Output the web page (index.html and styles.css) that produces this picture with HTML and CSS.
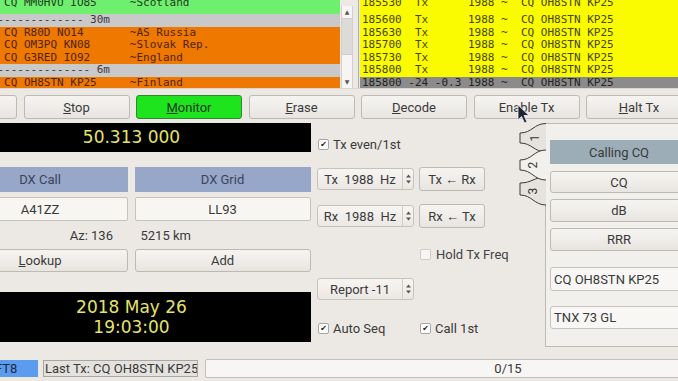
FILE: index.html
```html
<!DOCTYPE html>
<html lang="en">
<head>
  <meta charset="UTF-8" />
  <title>WSJT-X</title>
  <link rel="stylesheet" href="styles.css">
</head>
<body>

  <div class="decodes">
    <div class="pane band">
      <div class="row top green"> CQ MM0HVU IO85     ~Scotland</div>
      <div class="row sep">------------- 30m</div>
      <div class="row orange"> CQ R80D NO14       ~AS Russia</div>
      <div class="row orange"> CQ OM3PQ KN08      ~Slovak Rep.</div>
      <div class="row orange"> CQ G3RED IO92      ~England</div>
      <div class="row sep">-------------- 6m</div>
      <div class="row orange"> CQ OH8STN KP25     ~Finland</div>
    </div>
    <div class="scroll">
      <div class="sb-btn">▲</div>
      <div class="sb-thumb"></div>
      <div class="sb-track"></div>
      <div class="sb-btn">▼</div>
    </div>
    <div class="pane rx">
      <div class="row top yellow">185530  Tx      1988 ~  CQ OH8STN KP25</div>
      <div class="row yellow">185600  Tx      1988 ~  CQ OH8STN KP25</div>
      <div class="row yellow">185630  Tx      1988 ~  CQ OH8STN KP25</div>
      <div class="row yellow">185700  Tx      1988 ~  CQ OH8STN KP25</div>
      <div class="row yellow">185730  Tx      1988 ~  CQ OH8STN KP25</div>
      <div class="row yellow">185800  Tx      1988 ~  CQ OH8STN KP25</div>
      <div class="row dark">185800 -24 -0.3 1988 ~  CQ OH8STN KP25</div>
    </div>
  </div>

  <div class="buttons">
    <div class="btn">Log <u>Q</u>SO</div>
    <div class="btn"><u>S</u>top</div>
    <div class="btn monitor"><u>M</u>onitor</div>
    <div class="btn"><u>E</u>rase</div>
    <div class="btn"><u>D</u>ecode</div>
    <div class="btn">Enable Tx</div>
    <div class="btn"><u>H</u>alt Tx</div>
  </div>

  <div class="main">
    <div class="left">
      <div class="freq">50.313 000</div>
      <div class="pair labels">
        <div class="label-box">DX Call</div>
        <div class="label-box">DX Grid</div>
      </div>
      <div class="pair fields">
        <div class="field">A41ZZ</div>
        <div class="field">LL93</div>
      </div>
      <div class="pair info">
        <div class="az">Az: 136</div>
        <div class="dist">5215 km</div>
      </div>
      <div class="pair lookup">
        <div class="btn"><u>L</u>ookup</div>
        <div class="btn">Add</div>
      </div>
      <div class="clock">
        <div>2018 May 26</div>
        <div>19:03:00</div>
      </div>
    </div>

    <div class="mid">
      <div class="m-row r1">
        <div class="chk-label"><span class="chk on"></span>Tx even/1st</div>
      </div>
      <div class="m-row r2">
        <div class="spin">
          <div class="spin-text">Tx  1988  Hz</div>
          <div class="spin-arrows"><svg width="7" height="14" viewBox="0 0 7 14"><path d="M3.5 2.5L6 5.5H1Z M3.5 11.5L6 8.5H1Z" fill="#555"/></svg></div>
        </div>
        <div class="btn">Tx ← Rx</div>
      </div>
      <div class="m-row r3">
        <div class="spin">
          <div class="spin-text">Rx  1988  Hz</div>
          <div class="spin-arrows"><svg width="7" height="14" viewBox="0 0 7 14"><path d="M3.5 2.5L6 5.5H1Z M3.5 11.5L6 8.5H1Z" fill="#555"/></svg></div>
        </div>
        <div class="btn">Rx ← Tx</div>
      </div>
      <div class="m-row r4">
        <div></div>
        <div class="chk-label hold"><span class="chk off"></span>Hold Tx Freq</div>
      </div>
      <div class="m-row r5">
        <div class="spin">
          <div class="spin-text">Report -11</div>
          <div class="spin-arrows"><svg width="7" height="14" viewBox="0 0 7 14"><path d="M3.5 2.5L6 5.5H1Z M3.5 11.5L6 8.5H1Z" fill="#555"/></svg></div>
        </div>
      </div>
      <div class="m-row r6">
        <div class="chk-label"><span class="chk on"></span>Auto Seq</div>
        <div class="chk-label"><span class="chk on"></span>Call 1st</div>
      </div>
    </div>

    <div class="tabs">
      <svg class="tab-strip" width="27" height="90" viewBox="0 0 27 90">
        <path d="M26.5 3.5V88" stroke="#bdb9b3" fill="none"/>
        <path d="M27 3.5C15 3.5 13 13 1 13L1 23C13 23 15 32 27 32" fill="#e6e3de" stroke="#3a3a3a"/>
        <path d="M27 57C15 57 13 63 1 63L1 75C13 75 15 85 27 85" fill="#e6e3de" stroke="#3a3a3a"/>
        <path d="M27 30C15 30 13 40 1 40L1 50C13 50 15 60 27 60" fill="#f2f0ed" stroke="#3a3a3a"/>
        <text x="16" y="18" transform="rotate(-90 16 18)">1</text>
        <text x="14" y="45" transform="rotate(-90 14 45)">2</text>
        <text x="14" y="71" transform="rotate(-90 14 71)">3</text>
      </svg>
      <div class="tab-pane">
        <div class="msg-head">Calling CQ</div>
        <div class="btn msg-btn b1">CQ</div>
        <div class="btn msg-btn b2">dB</div>
        <div class="btn msg-btn b2">RRR</div>
        <div class="msg-field f1">CQ OH8STN KP25</div>
        <div class="msg-field f2">TNX 73 GL</div>
      </div>
    </div>
  </div>

  <div class="status">
    <div class="mode">FT8</div>
    <div class="last-tx">Last Tx: CQ OH8STN KP25</div>
    <div class="progress">0/15</div>
  </div>

  <svg class="cursor" width="14" height="21" viewBox="0 0 14 21">
    <path d="M1 1L1 16L4.5 12.5L7.5 19L10 18L7 11.5L12 11.5Z" fill="#1c2238" stroke="#f4f4f4" stroke-width="0.8"/>
  </svg>

</body>
</html>
```

FILE: styles.css
```css
body {
  margin: 0;
  width: 678px;
  height: 381px;
  overflow: hidden;
  position: relative;
  background: #ece9e4;
  font-family: Roboto, "Noto Sans", sans-serif;
  font-size: 13px;
  color: #3a3a3a;
}

/* decoded text panes */
.decodes {
  display: flex;
  height: 88px;
  border-bottom: 1px solid #d9d6d1;
}
.pane {
  font-family: "DejaVu Sans Mono", monospace;
  font-size: 11px;
  overflow: hidden;
}
.band {
  width: 340px;
  flex: none;
}
.band .row {
  text-indent: -2.6px;
}
.row {
  height: 12.5px;
  line-height: 11px;
  white-space: pre;
}
.row.top {
  height: 14px;
  line-height: 6px;
}
.green { background: #6ef06e; color: #1f3a1f; }
.sep { background: #c9c9c9; color: #3a3a3a; }
.orange { background: #ef7800; color: #4e2408; }
.yellow { background: #fafa00; color: #46460e; }
.dark { background: #8b8b8b; color: #222; }

.scroll {
  width: 12px;
  flex: none;
  margin: 6px 0 0 1px;
  display: flex;
  flex-direction: column;
  background: #f6f5f3;
  border-left: 1px solid #d3d0cb;
  border-right: 1px solid #d3d0cb;
  box-sizing: border-box;
}
.sb-btn {
  height: 12px;
  font-family: "DejaVu Sans", sans-serif;
  font-size: 6px;
  line-height: 12px;
  text-align: center;
  color: #555;
}
.sb-thumb {
  height: 37px;
  background: #dddbd7;
  border-top: 1px solid #cfccc7;
  border-bottom: 1px solid #cfccc7;
  box-sizing: border-box;
}
.sb-track {
  flex: 1;
}
.rx {
  flex: 1;
  margin-left: 5px;
  border-left: 1px solid #b3b0ab;
  padding-left: 1px;
}
.rx .row {
  padding-left: 2px;
}

/* button row */
.buttons {
  display: flex;
  gap: 6.5px;
  margin: 6px 0 0 -89px;
  height: 24px;
}
.btn {
  box-sizing: border-box;
  border: 1px solid #bdb9b3;
  border-radius: 3px;
  background: linear-gradient(#f6f4f1, #e8e5e1);
  display: flex;
  align-items: center;
  justify-content: center;
  white-space: nowrap;
}
.buttons .btn {
  width: 106px;
  flex: none;
}
.btn.monitor {
  background: #1ee41e;
  border-color: #2f8a2f;
  color: #253525;
}

/* main area */
.main {
  display: flex;
  height: 239px;
}
.left {
  margin-left: -48px;
  width: 359px;
  flex: none;
}
.freq, .clock {
  background: #000;
  color: #e4e46c;
  font-family: "DejaVu Sans", sans-serif;
  font-size: 17px;
  text-align: center;
}
.freq {
  margin-top: 4px;
  height: 29px;
  line-height: 29px;
}
.pair {
  display: grid;
  grid-template-columns: 176px 176px;
  column-gap: 6.5px;
}
.labels {
  margin-top: 15px;
  height: 25px;
}
.label-box {
  background: #97a7ca;
  color: #3c4358;
  display: flex;
  align-items: center;
  justify-content: center;
}
.fields {
  margin-top: 5px;
  height: 24px;
}
.field {
  box-sizing: border-box;
  background: #f8f6f3;
  border: 1px solid #c6c2bc;
  border-radius: 2px;
  display: flex;
  align-items: center;
  justify-content: center;
}
.info {
  height: 28px;
  align-items: center;
}
.az {
  text-align: right;
  padding-right: 15px;
}
.dist {
  padding-left: 6px;
}
.lookup {
  height: 23px;
}
.clock {
  margin-top: 20px;
  height: 50px;
  padding-top: 5px;
  box-sizing: border-box;
  line-height: 20px;
}

/* middle controls */
.mid {
  margin-left: 6px;
  width: 202px;
  flex: none;
  display: flex;
  flex-direction: column;
}
.m-row {
  display: grid;
  grid-template-columns: 97px 66px;
  column-gap: 5px;
  align-items: center;
}
.r1 { margin-top: 18px; height: 12px; }
.r2 { margin-top: 18px; height: 24px; }
.r3 { margin-top: 13px; height: 24px; }
.r4 { margin-top: 19px; height: 12px; }
.r5 { margin-top: 19px; height: 22px; }
.r6 { margin-top: 21px; height: 12px; }
.m-row .btn {
  height: 24px;
}
.chk-label {
  display: flex;
  align-items: center;
  gap: 4px;
  white-space: nowrap;
  margin-left: 1px;
}
.hold {
  gap: 5px;
  color: #444;
}
.chk {
  width: 11px;
  height: 11px;
  box-sizing: border-box;
  border: 1px solid #a9a6a1;
  border-radius: 2px;
  background: #fff;
  display: flex;
  align-items: center;
  justify-content: center;
  flex: none;
}
.chk.off {
  border-color: #cfccc7;
  background: #f7f6f4;
}
.chk.on::after {
  content: "✔";
  font-family: "DejaVu Sans", sans-serif;
  font-size: 8px;
  line-height: 9px;
  color: #222;
}
.spin {
  height: 22px;
  box-sizing: border-box;
  border: 1px solid #c6c2bc;
  border-radius: 3px;
  background: linear-gradient(#f7f5f2, #ebe8e4);
  display: flex;
}
.spin-text {
  flex: 1;
  white-space: pre;
  display: flex;
  align-items: center;
  justify-content: center;
}
.spin-arrows {
  width: 10px;
  border-left: 1px solid #d0cdc8;
  display: flex;
  align-items: center;
  justify-content: center;
}

/* tab widget */
.tabs {
  display: flex;
  align-items: flex-start;
  margin-top: 1px;
}
.tab-strip {
  flex: none;
  position: relative;
  z-index: 1;
  margin-right: -1px;
  font-family: Roboto, sans-serif;
  font-size: 12px;
}
.tab-strip text {
  fill: #333;
  text-anchor: middle;
  dominant-baseline: central;
}
.tab-pane {
  margin-top: 3px;
  width: 170px;
  height: 224px;
  flex: none;
  box-sizing: border-box;
  border: 1px solid #bdb9b3;
  background: #f2f0ed;
  padding: 16px 0 0 4px;
}
.tab-pane > div {
  width: 138px;
}
.msg-head {
  height: 24px;
  background: #9cadb8;
  display: flex;
  align-items: center;
  justify-content: center;
}
.msg-btn.b1 { margin-top: 7px; height: 22px; }
.msg-btn.b2 { margin-top: 6px; height: 23px; }
.msg-field {
  box-sizing: border-box;
  border: 1px solid #c6c2bc;
  border-radius: 3px;
  background: #f8f7f5;
  padding-left: 3px;
  display: flex;
  align-items: center;
  white-space: nowrap;
}
.msg-field.f1 { margin-top: 16px; height: 24px; }
.msg-field.f2 { margin-top: 15px; height: 23px; }

/* status bar */
.status {
  display: flex;
  align-items: center;
  height: 20px;
}
.mode {
  width: 38px;
  height: 17px;
  flex: none;
  background: #5b9cee;
  color: #1d2a44;
  text-indent: -5px;
  line-height: 17px;
  overflow: hidden;
}
.last-tx {
  margin-left: 5px;
  width: 155px;
  height: 17px;
  flex: none;
  box-sizing: border-box;
  background: #e4e2de;
  border: 1px solid #a9a6a1;
  line-height: 15px;
  padding-left: 1px;
  white-space: nowrap;
  overflow: hidden;
}
.progress {
  margin-left: 7px;
  width: 606px;
  height: 19px;
  flex: none;
  box-sizing: border-box;
  background: #f7f6f4;
  border: 1px solid #c3c0bb;
  border-radius: 2px;
  text-align: center;
  line-height: 17px;
}

.cursor {
  position: absolute;
  left: 517px;
  top: 104px;
}
```
